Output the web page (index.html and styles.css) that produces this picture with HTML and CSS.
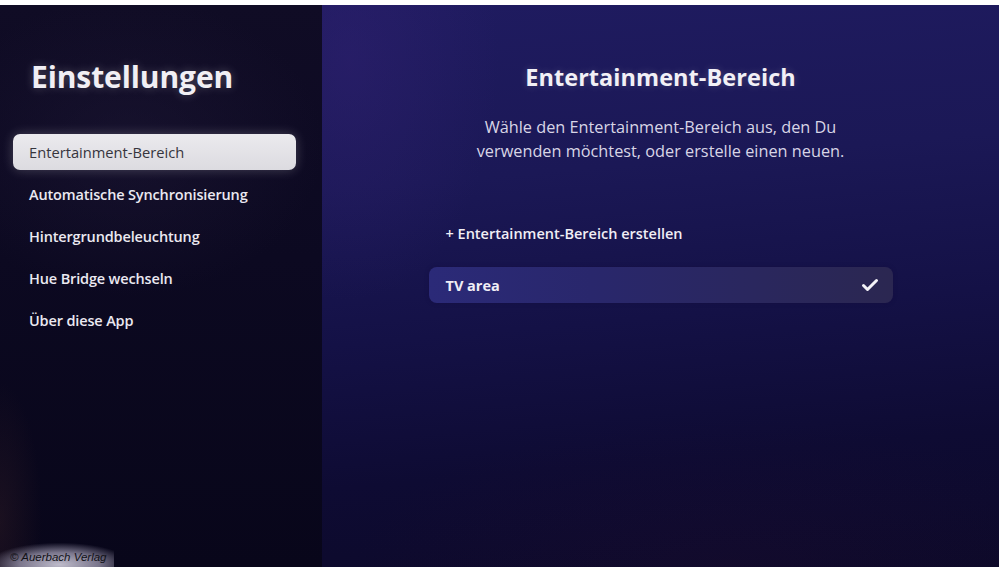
FILE: index.html
```html
<!DOCTYPE html>
<html lang="de">
<head>
<meta charset="utf-8">
<title>Einstellungen</title>
<link rel="stylesheet" href="styles.css">
</head>
<body>
<div class="screen">
  <aside class="sidebar">
    <h1 class="side-title">Einstellungen</h1>
    <ul class="menu">
      <li class="menu-item is-active"><span class="menu-box">Entertainment-Bereich</span></li>
      <li class="menu-item"><span class="menu-box">Automatische Synchronisierung</span></li>
      <li class="menu-item"><span class="menu-box">Hintergrundbeleuchtung</span></li>
      <li class="menu-item"><span class="menu-box">Hue Bridge wechseln</span></li>
      <li class="menu-item"><span class="menu-box">Über diese App</span></li>
    </ul>
  </aside>
  <main class="content">
    <h2 class="content-title">Entertainment-Bereich</h2>
    <p class="content-text">Wähle den Entertainment-Bereich aus, den Du<br>verwenden möchtest, oder erstelle einen neuen.</p>
    <div class="areas">
      <div class="area-row area-create">+ Entertainment-Bereich erstellen</div>
      <div class="area-row area-selected">
        <span>TV area</span>
        <svg class="check" width="18" height="14" viewBox="0 0 18 14" aria-hidden="true">
          <polyline points="2.5,7.5 6.5,11.5 15.5,2.5" fill="none" stroke="#f4f3f8" stroke-width="3" stroke-linecap="round" stroke-linejoin="round"/>
        </svg>
      </div>
    </div>
  </main>
  <div class="watermark">© Auerbach Verlag</div>
</div>
</body>
</html>
```

FILE: styles.css
```css
* { box-sizing: border-box; }

html, body {
  margin: 0;
  padding: 0;
  background: #ffffff;
}

body {
  font-family: "Open Sans", "Noto Sans", sans-serif;
}

.screen {
  position: relative;
  margin-top: 5px;
  height: 562px;
  width: 999px;
  display: flex;
  overflow: hidden;
}

.sidebar {
  width: 322px;
  flex: none;
  padding-top: 50px;
  background:
    radial-gradient(ellipse 60px 200px at 0% 92%, rgba(80, 45, 45, 0.25), rgba(0,0,0,0) 70%),
    radial-gradient(ellipse 260px 200px at 40% 25%, rgba(35, 28, 60, 0.4), rgba(0,0,0,0) 75%),
    linear-gradient(180deg, #100c25 0%, #0c0921 45%, #08061a 100%);
}

.side-title {
  margin: 0 0 0 31px;
  height: 44px;
  line-height: 44px;
  font-size: 30px;
  font-weight: 700;
  color: #f1eff4;
  letter-spacing: -0.1px;
  text-shadow: 0 0 10px rgba(255, 255, 255, 0.25);
}

.menu {
  list-style: none;
  margin: 32px 0 0 0;
  padding: 0;
}

.menu-item {
  height: 42px;
  padding: 3px 26px 3px 13px;
  display: flex;
}

.menu-box {
  flex: 1;
  display: flex;
  align-items: center;
  padding-left: 16px;
  border-radius: 7px;
  font-size: 14.5px;
  font-weight: 600;
  color: #ebe9f1;
  letter-spacing: -0.15px;
}

.is-active .menu-box {
  background: linear-gradient(180deg, #ebeaee 0%, #dcdbe0 100%);
  color: #36353d;
  font-weight: 400;
  font-size: 14.7px;
  letter-spacing: 0;
  box-shadow: 0 0 12px rgba(255, 255, 255, 0.22);
}

.content {
  flex: 1;
  display: flex;
  flex-direction: column;
  align-items: center;
  padding-top: 56px;
  background:
    radial-gradient(ellipse 200px 320px at 4% 10%, rgba(55, 35, 120, 0.35), rgba(0,0,0,0) 75%),
    radial-gradient(ellipse 500px 200px at 60% 100%, rgba(45, 15, 50, 0.18), rgba(0,0,0,0) 75%),
    linear-gradient(175deg, #1f1b60 0%, #1b1856 30%, #141146 55%, #0e0b33 78%, #0c0929 100%);
}

.content-title {
  margin: 0;
  height: 32px;
  line-height: 32px;
  font-size: 23.5px;
  font-weight: 700;
  letter-spacing: 0.05px;
  color: #f2f0f6;
  text-shadow: 0 0 8px rgba(255, 255, 255, 0.18);
}

.content-text {
  margin: 22px 0 0 0;
  font-size: 16.3px;
  line-height: 24px;
  font-weight: 400;
  color: #d8d5e6;
  text-align: center;
}

.areas {
  width: 464px;
  margin-top: 52px;
  display: flex;
  flex-direction: column;
  gap: 16px;
}

.area-row {
  height: 36px;
  display: flex;
  align-items: center;
  justify-content: space-between;
  padding: 0 14px 0 17px;
  font-size: 14.5px;
  font-weight: 600;
  color: #f0eef5;
  border-radius: 8px;
}

.area-selected {
  font-weight: 700;
  background: linear-gradient(90deg, #2b2a78 0%, #29276c 35%, #2a275e 70%, #2b2751 100%);
  box-shadow: 0 0 4px rgba(20, 10, 60, 0.4);
}

.check {
  display: block;
}

.watermark {
  position: absolute;
  left: 0;
  bottom: 0;
  width: 114px;
  height: 24px;
  padding: 7px 0 0 10px;
  font-family: "Liberation Sans", Arial, sans-serif;
  font-style: italic;
  font-size: 11.5px;
  line-height: 14px;
  color: #111116;
  background: radial-gradient(ellipse 72px 22px at 52% 90%, rgba(200, 197, 212, 0.95) 0%, rgba(160, 155, 178, 0.75) 55%, rgba(60, 50, 80, 0) 100%);
}
```
